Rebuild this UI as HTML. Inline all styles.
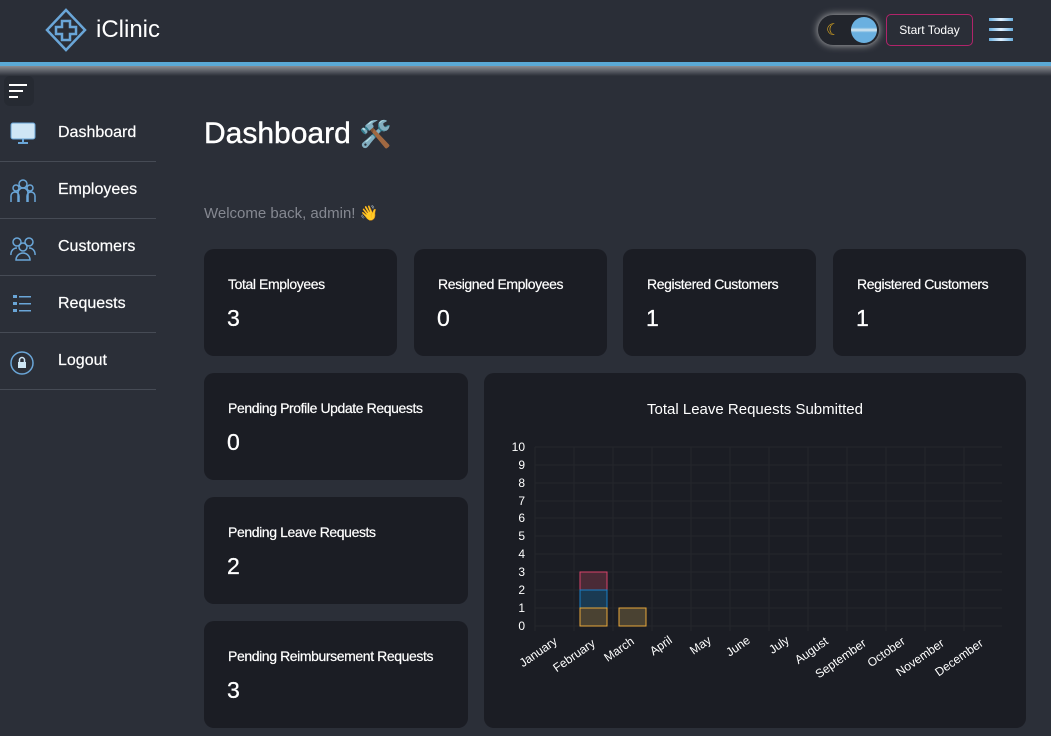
<!DOCTYPE html>
<html><head><meta charset="utf-8"><style>
*{box-sizing:border-box;margin:0;padding:0}
body{width:1051px;height:736px;overflow:hidden;background:#2b2f38;font-family:"Liberation Sans",sans-serif;color:#fff;position:relative}
.hdr{position:absolute;left:0;top:0;width:1051px;height:62px;background:#2a2e37}
.line{position:absolute;left:0;top:62px;width:1051px;height:4px;background:#5aa9d6}
.shadow{position:absolute;left:0;top:66px;width:1051px;height:10px;background:linear-gradient(#8a8d93,#2b2f38)}
.card{position:absolute;background:#1b1d24;border-radius:10px}
.card .t{position:absolute;left:24px;top:27px;font-size:14px;letter-spacing:-0.4px;-webkit-text-stroke:0.2px #fff}
.card .v{position:absolute;left:23px;top:56px;font-size:23px;-webkit-text-stroke:0.3px #fff}
.nav{position:absolute;left:0;width:156px;height:57px;border-bottom:1px solid #464b55}
.nav span{position:absolute;left:58px;top:19px;font-size:16px;-webkit-text-stroke:0.2px #fff}
.nav svg{position:absolute;left:10px;top:16px}
</style></head><body>
<div class="hdr"></div><div class="line"></div><div class="shadow"></div>
<svg style="position:absolute;left:45px;top:8px" width="42" height="44" viewBox="0 0 42 44"><path d="M21 2 L40 22 L21 42 L2 22 Z" fill="none" stroke="#6aa6d8" stroke-width="2.5"/><path d="M17 13h8v6h6v7h-6v6h-8v-6h-6v-7h6z" fill="none" stroke="#6aa6d8" stroke-width="2.5"/></svg>
<div style="position:absolute;left:96px;top:16px;font-size:24px">iClinic</div>
<div style="position:absolute;left:818px;top:15px;width:61px;height:30px;border-radius:15px;background:#22252c;box-shadow:0 0 8px #bbb"></div>
<div style="position:absolute;left:826px;top:20px;color:#e8b020;font-size:16px">☾</div>
<div style="position:absolute;left:851px;top:17px;width:26px;height:26px;border-radius:50%;background:linear-gradient(#6ab0e0 40%,#d8e8f0 50%,#6ab0e0 60%)"></div>
<div style="position:absolute;left:886px;top:14px;width:87px;height:32px;border:1px solid #b0246a;border-radius:5px;font-size:12px;text-align:center;line-height:30px">Start Today</div>
<div style="position:absolute;left:989px;top:18px;width:24px;height:3px;background:linear-gradient(90deg,#6ab0e0,#e0f0ff,#6ab0e0)"></div>
<div style="position:absolute;left:989px;top:28px;width:24px;height:3px;background:linear-gradient(90deg,#6ab0e0,#e0f0ff,#6ab0e0)"></div>
<div style="position:absolute;left:989px;top:38px;width:24px;height:3px;background:linear-gradient(90deg,#6ab0e0,#e0f0ff,#6ab0e0)"></div>
<div style="position:absolute;left:4px;top:76px;width:30px;height:30px;background:#262a32;border-radius:6px"></div>
<div style="position:absolute;left:9px;top:84px;width:18px;height:2px;background:#fff"></div>
<div style="position:absolute;left:9px;top:90px;width:14px;height:2px;background:#fff"></div>
<div style="position:absolute;left:9px;top:96px;width:9px;height:2px;background:#fff"></div>
<div class="nav" style="top:105px"><svg width="26" height="24"><rect x="1" y="2" width="24" height="16" rx="2" fill="#cfe6f5" stroke="#6aa6d8"/><path d="M13 18v4M8 22h10" stroke="#6aa6d8" stroke-width="2"/></svg><span>Dashboard</span></div>
<div class="nav" style="top:162px"><svg width="26" height="26"><g fill="none" stroke="#6aa6d8" stroke-width="1.5"><circle cx="13" cy="6" r="4"/><circle cx="6" cy="10" r="3"/><circle cx="20" cy="10" r="3"/><path d="M1 24v-6a4 4 0 0 1 8 0v6M17 24v-6a4 4 0 0 1 8 0v6M8 24v-9a5 5 0 0 1 10 0v9"/></g></svg><span>Employees</span></div>
<div class="nav" style="top:219px"><svg width="26" height="26"><g fill="none" stroke="#6aa6d8" stroke-width="1.5"><circle cx="7" cy="7" r="4"/><circle cx="19" cy="7" r="4"/><circle cx="13" cy="12" r="4"/><path d="M1 20a6 6 0 0 1 6-7M25 20a6 6 0 0 0-6-7M6 25a7 7 0 0 1 14 0z"/></g></svg><span>Customers</span></div>
<div class="nav" style="top:276px"><svg width="26" height="24"><g fill="#6aa6d8"><rect x="3" y="3" width="4" height="3"/><rect x="3" y="10" width="4" height="3"/><rect x="3" y="17" width="4" height="3"/><rect x="9" y="4" width="12" height="1.5"/><rect x="9" y="11" width="12" height="1.5"/><rect x="9" y="18" width="12" height="1.5"/></g></svg><span>Requests</span></div>
<div class="nav" style="top:333px"><svg width="26" height="26"><circle cx="12" cy="14" r="11" fill="none" stroke="#6aa6d8" stroke-width="1.5"/><rect x="8" y="13" width="8" height="6" fill="#cfe6f5"/><path d="M9.5 13v-2a2.5 2.5 0 0 1 5 0v2" fill="none" stroke="#cfe6f5" stroke-width="1.5"/></svg><span>Logout</span></div>
<div style="position:absolute;left:204px;top:117px;font-size:30px;-webkit-text-stroke:0.4px #fff">Dashboard <span style="font-size:26px">🛠️</span></div>
<div style="position:absolute;left:204px;top:204px;font-size:15px;color:#858891">Welcome back, admin! 👋</div>
<div class="card" style="left:204px;top:249px;width:193px;height:107px"><div class="t">Total Employees</div><div class="v">3</div></div>
<div class="card" style="left:414px;top:249px;width:193px;height:107px"><div class="t">Resigned Employees</div><div class="v">0</div></div>
<div class="card" style="left:623px;top:249px;width:193px;height:107px"><div class="t">Registered Customers</div><div class="v">1</div></div>
<div class="card" style="left:833px;top:249px;width:193px;height:107px"><div class="t">Registered Customers</div><div class="v">1</div></div>
<div class="card" style="left:204px;top:373px;width:264px;height:107px"><div class="t">Pending Profile Update Requests</div><div class="v">0</div></div>
<div class="card" style="left:204px;top:497px;width:264px;height:107px"><div class="t">Pending Leave Requests</div><div class="v">2</div></div>
<div class="card" style="left:204px;top:621px;width:264px;height:107px"><div class="t">Pending Reimbursement Requests</div><div class="v">3</div></div>
<div class="card" style="left:484px;top:373px;width:542px;height:355px"></div>
<svg style="position:absolute;left:484px;top:373px" width="542" height="355">
<text x="271" y="41" fill="#fff" font-size="15" text-anchor="middle" font-family="Liberation Sans">Total Leave Requests Submitted</text>
<g stroke="#24262c" stroke-width="1">
<line x1="51" y1="74" x2="518" y2="74"/><line x1="51" y1="92" x2="518" y2="92"/><line x1="51" y1="110" x2="518" y2="110"/><line x1="51" y1="128" x2="518" y2="128"/><line x1="51" y1="145" x2="518" y2="145"/><line x1="51" y1="163" x2="518" y2="163"/><line x1="51" y1="181" x2="518" y2="181"/><line x1="51" y1="199" x2="518" y2="199"/><line x1="51" y1="217" x2="518" y2="217"/><line x1="51" y1="235" x2="518" y2="235"/><line x1="51" y1="253" x2="518" y2="253"/>
<line x1="51" y1="74" x2="51" y2="258"/><line x1="90" y1="74" x2="90" y2="258"/><line x1="129" y1="74" x2="129" y2="258"/><line x1="168" y1="74" x2="168" y2="258"/><line x1="207" y1="74" x2="207" y2="258"/><line x1="246" y1="74" x2="246" y2="258"/><line x1="285" y1="74" x2="285" y2="258"/><line x1="324" y1="74" x2="324" y2="258"/><line x1="363" y1="74" x2="363" y2="258"/><line x1="402" y1="74" x2="402" y2="258"/><line x1="441" y1="74" x2="441" y2="258"/><line x1="480" y1="74" x2="480" y2="258"/>
</g>
<g font-size="12" fill="#fff" text-anchor="end" font-family="Liberation Sans">
<text x="41" y="78">10</text><text x="41" y="96">9</text><text x="41" y="114">8</text><text x="41" y="132">7</text><text x="41" y="149">6</text><text x="41" y="167">5</text><text x="41" y="185">4</text><text x="41" y="203">3</text><text x="41" y="221">2</text><text x="41" y="239">1</text><text x="41" y="257">0</text>
</g>
<rect x="96" y="199" width="27" height="18" fill="#4a2a36" stroke="#d8436a"/>
<rect x="96" y="217" width="27" height="18" fill="#1a3a52" stroke="#1a80c8"/>
<rect x="96" y="235" width="27" height="18" fill="#4a4232" stroke="#e8a83a"/>
<rect x="135" y="235" width="27" height="18" fill="#4a4232" stroke="#e8a83a"/>
<g font-size="12" fill="#fff" text-anchor="end" font-family="Liberation Sans">
<text transform="translate(74,270) rotate(-35)">January</text>
<text transform="translate(112,272) rotate(-35)">February</text>
<text transform="translate(151,270) rotate(-35)">March</text>
<text transform="translate(189,269) rotate(-35)">April</text>
<text transform="translate(228,269) rotate(-35)">May</text>
<text transform="translate(267,269) rotate(-35)">June</text>
<text transform="translate(306,269) rotate(-35)">July</text>
<text transform="translate(345,270) rotate(-35)">August</text>
<text transform="translate(383,272) rotate(-35)">September</text>
<text transform="translate(422,270) rotate(-35)">October</text>
<text transform="translate(461,272) rotate(-35)">November</text>
<text transform="translate(500,272) rotate(-35)">December</text>
</g>
</svg>
</body></html>
